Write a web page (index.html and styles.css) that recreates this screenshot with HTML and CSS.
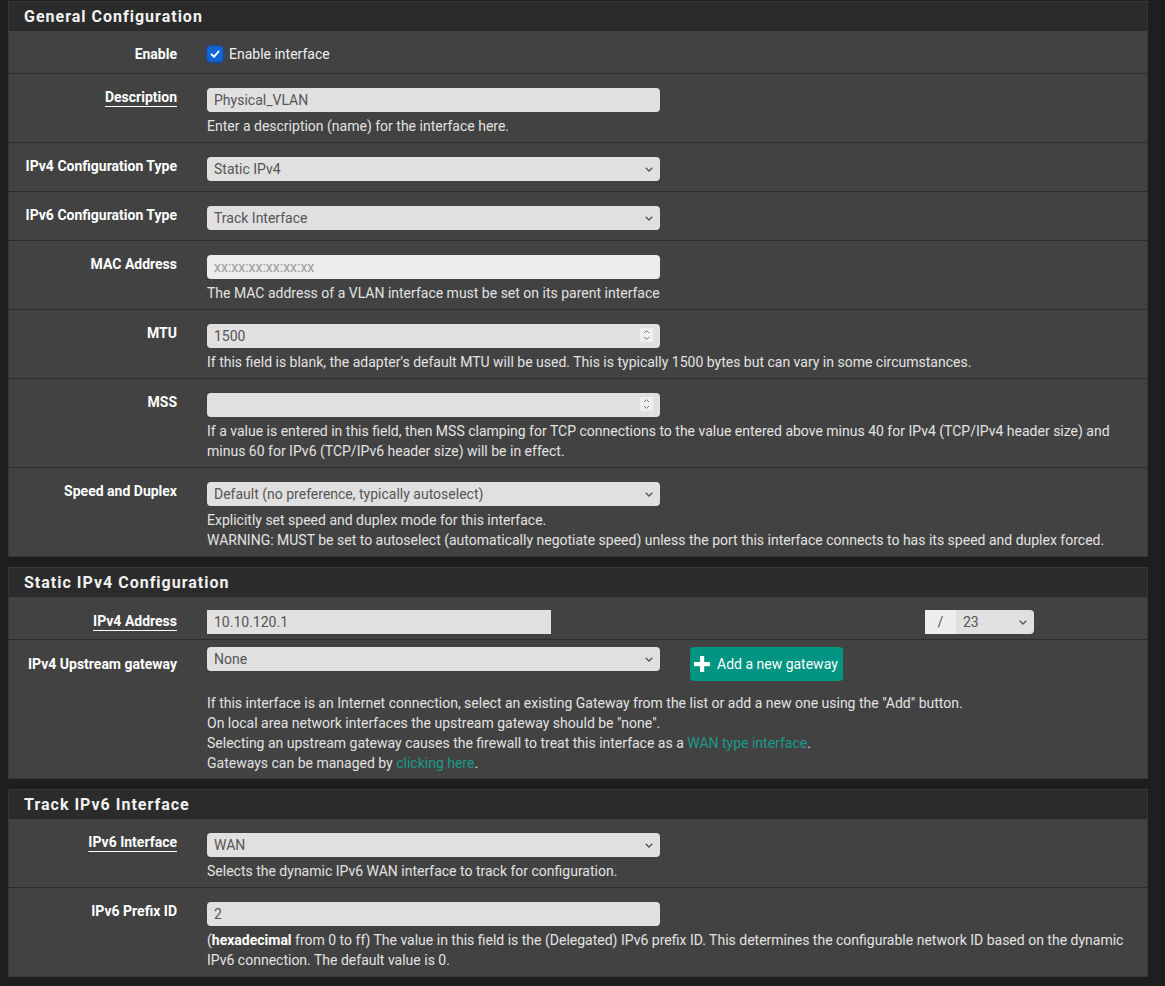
FILE: index.html
```html
<!DOCTYPE html>
<html lang="en">
<head>
<meta charset="utf-8">
<title>Interfaces</title>
<link rel="stylesheet" href="styles.css">
</head>
<body>
<div class="page">

  <section class="panel">
    <div class="panel-heading"><h2>General Configuration</h2></div>
    <div class="panel-body">
      <div class="row">
        <div class="label">Enable</div>
        <div class="field">
          <label class="check">
            <span class="checkbox"><svg width="14" height="14" viewBox="0 0 14 14"><path d="M3.5 7.3 L6 9.8 L10.6 4.4" fill="none" stroke="#fff" stroke-width="1.9" stroke-linecap="round" stroke-linejoin="round"/></svg></span>
            Enable interface
          </label>
        </div>
      </div>

      <div class="row">
        <div class="label"><span class="u">Description</span></div>
        <div class="field">
          <div class="control"><input class="input" type="text" value="Physical_VLAN"></div>
          <div class="help">Enter a description (name) for the interface here.</div>
        </div>
      </div>

      <div class="row">
        <div class="label">IPv4 Configuration Type</div>
        <div class="field">
          <div class="control select-wrap">
            <select class="input select"><option>Static IPv4</option></select>
            <svg class="chev" width="8" height="5" viewBox="0 0 8 5"><polyline points="0.7,0.7 4,4 7.3,0.7" fill="none" stroke="#555" stroke-width="1.3"/></svg>
          </div>
        </div>
      </div>

      <div class="row">
        <div class="label">IPv6 Configuration Type</div>
        <div class="field">
          <div class="control select-wrap">
            <select class="input select"><option>Track Interface</option></select>
            <svg class="chev" width="8" height="5" viewBox="0 0 8 5"><polyline points="0.7,0.7 4,4 7.3,0.7" fill="none" stroke="#555" stroke-width="1.3"/></svg>
          </div>
        </div>
      </div>

      <div class="row">
        <div class="label">MAC Address</div>
        <div class="field">
          <div class="control"><input class="input light" type="text" placeholder="xx:xx:xx:xx:xx:xx"></div>
          <div class="help">The MAC address of a VLAN interface must be set on its parent interface</div>
        </div>
      </div>

      <div class="row">
        <div class="label">MTU</div>
        <div class="field">
          <div class="control spin-wrap">
            <input class="input" type="text" value="1500">
            <span class="spin"><svg width="13" height="14" viewBox="0 0 13 14"><polyline points="4,5 6.5,2.6 9,5" fill="none" stroke="#777" stroke-width="1"/><polyline points="4,9 6.5,11.4 9,9" fill="none" stroke="#777" stroke-width="1"/></svg></span>
          </div>
          <div class="help">If this field is blank, the adapter's default MTU will be used. This is typically 1500 bytes but can vary in some circumstances.</div>
        </div>
      </div>

      <div class="row">
        <div class="label">MSS</div>
        <div class="field">
          <div class="control spin-wrap">
            <input class="input" type="text" value="">
            <span class="spin"><svg width="13" height="14" viewBox="0 0 13 14"><polyline points="4,5 6.5,2.6 9,5" fill="none" stroke="#777" stroke-width="1"/><polyline points="4,9 6.5,11.4 9,9" fill="none" stroke="#777" stroke-width="1"/></svg></span>
          </div>
          <div class="help">If a value is entered in this field, then MSS clamping for TCP connections to the value entered above minus 40 for IPv4 (TCP/IPv4 header size) and minus 60 for IPv6 (TCP/IPv6 header size) will be in effect.</div>
        </div>
      </div>

      <div class="row">
        <div class="label">Speed and Duplex</div>
        <div class="field">
          <div class="control select-wrap">
            <select class="input select"><option>Default (no preference, typically autoselect)</option></select>
            <svg class="chev" width="8" height="5" viewBox="0 0 8 5"><polyline points="0.7,0.7 4,4 7.3,0.7" fill="none" stroke="#555" stroke-width="1.3"/></svg>
          </div>
          <div class="help">Explicitly set speed and duplex mode for this interface.<br>WARNING: MUST be set to autoselect (automatically negotiate speed) unless the port this interface connects to has its speed and duplex forced.</div>
        </div>
      </div>
    </div>
  </section>

  <section class="panel">
    <div class="panel-heading"><h2>Static IPv4 Configuration</h2></div>
    <div class="panel-body">
      <div class="row row-addr">
        <div class="label"><span class="u">IPv4 Address</span></div>
        <div class="field addr">
          <input class="input addr-input" type="text" value="10.10.120.1">
          <div class="mask-group">
            <span class="addon">/</span>
            <div class="select-wrap mask">
              <select class="input select mask-select"><option>23</option></select>
              <svg class="chev" width="8" height="5" viewBox="0 0 8 5"><polyline points="0.7,0.7 4,4 7.3,0.7" fill="none" stroke="#555" stroke-width="1.3"/></svg>
            </div>
          </div>
        </div>
      </div>

      <div class="row row-gw">
        <div class="label">IPv4 Upstream gateway</div>
        <div class="field">
          <div class="gw-line">
            <div class="control select-wrap">
              <select class="input select"><option>None</option></select>
              <svg class="chev" width="8" height="5" viewBox="0 0 8 5"><polyline points="0.7,0.7 4,4 7.3,0.7" fill="none" stroke="#555" stroke-width="1.3"/></svg>
            </div>
            <button class="btn" type="button"><svg width="16" height="16" viewBox="0 0 16 16"><rect x="6" y="0" width="4.2" height="16" fill="#fff"/><rect x="0" y="6" width="16" height="4.2" fill="#fff"/></svg>Add a new gateway</button>
          </div>
          <div class="help">If this interface is an Internet connection, select an existing Gateway from the list or add a new one using the "Add" button.<br>On local area network interfaces the upstream gateway should be "none".<br>Selecting an upstream gateway causes the firewall to treat this interface as a <a href="#">WAN type interface</a>.<br>Gateways can be managed by <a href="#">clicking here</a>.</div>
        </div>
      </div>
    </div>
  </section>

  <section class="panel">
    <div class="panel-heading"><h2>Track IPv6 Interface</h2></div>
    <div class="panel-body">
      <div class="row">
        <div class="label"><span class="u">IPv6 Interface</span></div>
        <div class="field">
          <div class="control select-wrap">
            <select class="input select"><option>WAN</option></select>
            <svg class="chev" width="8" height="5" viewBox="0 0 8 5"><polyline points="0.7,0.7 4,4 7.3,0.7" fill="none" stroke="#555" stroke-width="1.3"/></svg>
          </div>
          <div class="help">Selects the dynamic IPv6 WAN interface to track for configuration.</div>
        </div>
      </div>

      <div class="row">
        <div class="label">IPv6 Prefix ID</div>
        <div class="field">
          <div class="control"><input class="input" type="text" value="2"></div>
          <div class="help">(<b>hexadecimal</b> from 0 to ff) The value in this field is the (Delegated) IPv6 prefix ID. This determines the configurable network ID based on the dynamic IPv6 connection. The default value is 0.</div>
        </div>
      </div>
    </div>
  </section>

</div>
</body>
</html>
```

FILE: styles.css
```css
html, body {
  margin: 0;
  background: #1e1e1e;
}

body {
  font-family: Roboto, "Liberation Sans", sans-serif;
  font-size: 14px;
  color: #e2e2e2;
}

.page {
  padding: 1px 17px 0 8px;
}

.panel {
  border: 1px solid #363636;
  background: #424242;
  margin-bottom: 10px;
}

.panel-heading {
  height: 28px;
  background: #2b2b2b;
  border-bottom: 1px solid #282828;
  padding-left: 15px;
  display: flex;
  align-items: center;
}

.panel-heading h2 {
  margin: 0;
  font-size: 16px;
  font-weight: 700;
  letter-spacing: 1px;
  color: #f2f2f2;
}

.row {
  display: grid;
  grid-template-columns: 168px 1fr;
  column-gap: 30px;
  padding: 14px 15px 10px 0;
  border-bottom: 1px solid #2c2c2c;
}

.row:last-child {
  border-bottom: 0;
}

.label {
  text-align: right;
  font-weight: 700;
  line-height: 18px;
  color: #fff;
}

.u {
  text-decoration: underline;
  text-underline-offset: 4px;
  text-decoration-thickness: 1px;
}

.field {
  min-width: 0;
}

.help {
  line-height: 20px;
  margin: 4px 0 -4px;
}

.help b {
  color: #fff;
}

.help a {
  color: #1a9a87;
  text-decoration: none;
}

.check {
  display: flex;
  align-items: center;
  line-height: 18px;
  color: #f0f0f0;
}

.checkbox {
  width: 14px;
  height: 14px;
  margin: 0 7px 0 1px;
  border-radius: 3px;
  background: #0f66d9;
  box-shadow: 0 0 0 1px #1f5cb8, 0 0 0 3px #2a4677;
  display: flex;
  align-items: center;
  justify-content: center;
}

.checkbox svg {
  display: block;
}

.control {
  position: relative;
  width: 453px;
}

.input {
  display: block;
  width: 453px;
  height: 24px;
  box-sizing: border-box;
  border: 0;
  border-radius: 4px;
  background: #e0e0e0;
  color: #555;
  font-family: Roboto, "Liberation Sans", sans-serif;
  font-size: 14px;
  padding: 0 7px;
  margin: 0;
  outline: none;
}

.input.light {
  background: #ececec;
}

.input::placeholder {
  color: #9a9a9a;
  font-size: 14px;
}

.select {
  appearance: none;
  -webkit-appearance: none;
  padding-right: 24px;
}

.select-wrap {
  position: relative;
}

.chev {
  position: absolute;
  right: 7px;
  top: 10px;
  pointer-events: none;
}

.spin {
  position: absolute;
  right: 7px;
  top: 4px;
  width: 13px;
  height: 14px;
  background: #efefef;
  border-radius: 1px;
}

.spin svg {
  display: block;
}

.addr {
  display: flex;
  align-items: flex-start;
}

.addr-input {
  width: 344px;
  border-radius: 0;
}

.mask-group {
  display: flex;
  margin-left: 374px;
}

.addon {
  width: 31px;
  height: 24px;
  background: #eeeeee;
  color: #555;
  display: flex;
  align-items: center;
  justify-content: center;
}

.mask {
  width: 78px;
}

.mask-select {
  width: 78px;
  border-radius: 0 4px 4px 0;
}

.row-addr {
  padding-top: 13px;
  padding-bottom: 5px;
}

.row-addr .label {
  padding-top: 2px;
}

.row-gw {
  padding-top: 7px;
  padding-bottom: 5px;
}

.row-gw .label {
  padding-top: 8px;
}

.row-gw .help {
  margin: 12px 0 0;
}

.gw-line {
  display: flex;
  align-items: flex-start;
  gap: 30px;
}

.btn {
  height: 34px;
  display: flex;
  align-items: center;
  gap: 7px;
  padding: 0 5px 0 4px;
  border: 0;
  border-radius: 4px;
  background: #009482;
  color: #fff;
  font-family: Roboto, "Liberation Sans", sans-serif;
  font-size: 14px;
  cursor: pointer;
}

.btn svg {
  display: block;
  flex: none;
}
```
